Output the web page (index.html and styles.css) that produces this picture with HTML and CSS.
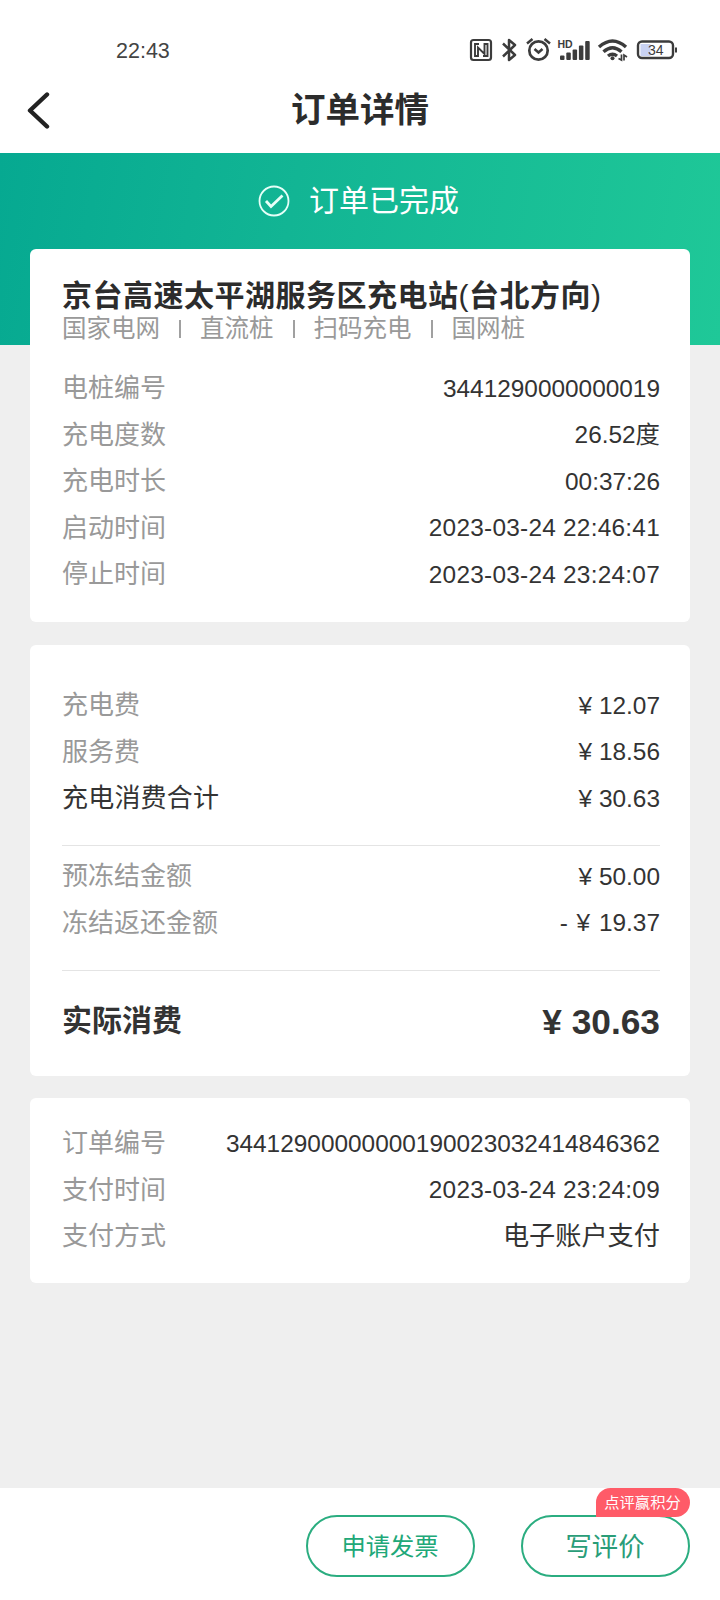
FILE: index.html
```html
<!DOCTYPE html>
<html lang="zh-CN">
<head>
<meta charset="utf-8">
<title>订单详情</title>
<link rel="stylesheet" href="styles.css">
</head>
<body>
<div class="screen">
  <div class="statusbar">
    <span class="clock">22:43</span>
    <svg class="sysicons" width="210" height="28" viewBox="468 36 210 28" fill="none" stroke="#3c3c3c" stroke-width="2">
      <rect x="471" y="40" width="20" height="20" rx="2.5" stroke-width="2.2"/>
      <path d="M479 44H475V56H478V47.500L484.500 54V44H487.500V56H483" stroke-width="1.900"/>
      <path d="M503 43.500l12 11.500-6 5V40l6 5-12 11.500" stroke-width="2.500" stroke-linejoin="round"/>
      <circle cx="538.500" cy="50.500" r="9.200" stroke-width="2.700"/>
      <path d="M534.500 49l4 3.500 4-3.500M527 43.500l5.500-4.500M550 43.500l-5.500-4.500" stroke-width="2.500"/>
      <g fill="#3c3c3c" stroke="none">
        <text class="hd" x="557.500" y="47.500">HD</text>
        <rect x="560" y="55.500" width="4.500" height="4.500" rx="1"/>
        <rect x="566.300" y="52.500" width="4.500" height="7.500" rx="1"/>
        <rect x="572.600" y="49.500" width="4.500" height="10.500" rx="1"/>
        <rect x="578.900" y="45.500" width="4.500" height="14.500" rx="1"/>
        <rect x="585.200" y="41" width="4.500" height="19" rx="1"/>
      </g>
      <path d="M599 47q13.500-12 27 0M603.500 51.800q9-8 18 0M608 56q4.500-3.500 9 0" stroke-width="3.400"/>
      <circle cx="612.500" cy="58.300" r="2" fill="#3c3c3c" stroke="none"/>
      <path d="M618.500 58.500l3 1.500v-5.500M624 60.500v-5.500l3 2" stroke-width="1.700"/>
      <rect x="640.500" y="44" width="10" height="12" fill="#c9d2f3" stroke="none"/>
      <rect x="638" y="41.500" width="35" height="16.500" rx="4" stroke-width="2.400"/>
      <path d="M676 47.500v5"/>
      <text class="charge" x="648" y="54.500">34</text>
    </svg>
  </div>
  <header class="navbar">
    <svg class="back" width="24" height="40" viewBox="0 0 24 40" fill="none" stroke="#222" stroke-width="4.400" stroke-linecap="round" stroke-linejoin="round"><path d="M20 4.500L3 20.500 20 36.500"/></svg>
    <h1>订单详情</h1>
  </header>
  <main>
    <div class="banner">
      <svg width="32" height="32" viewBox="0 0 32 32" fill="none" stroke="#e6fff8" stroke-width="1.800"><circle cx="16" cy="16" r="14.500"/><path d="M8 16l5 5.500L24.500 10.500" stroke-width="2.800"/></svg>
      <span>订单已完成</span>
    </div>
    <section class="card station">
      <h2>京台高速太平湖服务区充电站<i>(</i>台北方向<i>)</i></h2>
      <p class="tags"><span>国家电网</span><b></b><span>直流桩</span><b></b><span>扫码充电</span><b></b><span>国网桩</span></p>
      <dl>
        <div><dt>电桩编号</dt><dd>3441290000000019</dd></div>
        <div><dt>充电度数</dt><dd>26.52度</dd></div>
        <div><dt>充电时长</dt><dd>00:37:26</dd></div>
        <div><dt>启动时间</dt><dd class="date">2023-03-24 22:46:41</dd></div>
        <div><dt>停止时间</dt><dd class="date">2023-03-24 23:24:07</dd></div>
      </dl>
    </section>
    <section class="card fees">
      <dl>
        <div><dt>充电费</dt><dd>¥ 12.07</dd></div>
        <div><dt>服务费</dt><dd>¥ 18.56</dd></div>
        <div><dt class="dark">充电消费合计</dt><dd>¥ 30.63</dd></div>
      </dl>
      <dl class="frozen">
        <div><dt>预冻结金额</dt><dd>¥ 50.00</dd></div>
        <div><dt>冻结返还金额</dt><dd class="refund">- ¥ 19.37</dd></div>
      </dl>
      <div class="total"><span>实际消费</span><strong>¥ 30.63</strong></div>
    </section>
    <section class="card payment">
      <dl>
        <div><dt>订单编号</dt><dd>34412900000000190023032414846362</dd></div>
        <div><dt>支付时间</dt><dd class="date">2023-03-24 23:24:09</dd></div>
        <div><dt>支付方式</dt><dd class="method">电子账户支付</dd></div>
      </dl>
    </section>
  </main>
  <footer>
    <button class="invoice">申请发票</button>
    <button class="review">写评价<span class="badge">点评赢积分</span></button>
  </footer>
</div>
</body>
</html>
```
FILE: styles.css
```css
* { box-sizing: border-box; margin: 0; padding: 0; }
body { font-family: "Liberation Sans", "Noto Sans CJK SC", sans-serif; color: #333; background: #efefef; }
.screen { width: 720px; height: 1600px; display: flex; flex-direction: column; overflow: hidden; }
.statusbar { height: 72px; flex: none; background: #fff; display: flex; justify-content: space-between; padding: 36px 42px 0 116px; }
.clock { font-size: 21.5px; line-height: 30px; color: #444; }
.hd { font: bold 10.5px "Liberation Sans", sans-serif; }
.charge { font: 14px "Liberation Sans", sans-serif; fill: #3c3c3c; stroke: none; }
.navbar { height: 81px; flex: none; background: #fff; display: grid; grid-template-columns: 1fr auto 1fr; align-items: start; padding: 18px 26px 0; }
.back { margin-left: 1px; }
.navbar h1 { font-size: 34.5px; line-height: 40px; font-weight: 700; color: #2c2c2c; }
main { flex: 1; }
.banner { height: 192px; display: flex; justify-content: center; align-items: flex-start; gap: 19px; padding: 32px 3px 0 0; background: linear-gradient(100deg, #06a991 0%, #12b594 40%, #1fc898 100%); color: #fff; font-size: 30px; line-height: 32px; }
.card { margin: 0 30px; background: #fff; border-radius: 6px; padding: 0 30px 0 32px; }
.station { position: relative; margin-top: -96px; height: 373px; padding-top: 28px; }
.station h2 { font-size: 30px; line-height: 38px; font-weight: 700; letter-spacing: 0.5px; color: #2c2c2c; white-space: nowrap; }
.station h2 i { font-style: normal; font-weight: 400; }
.tags { display: flex; align-items: center; gap: 19px; height: 28px; font-size: 24.5px; line-height: 28px; color: #999; }
.tags b { width: 2px; height: 18px; background: #a0a0a0; }
.station dl { padding-top: 22px; }
dl > div { display: flex; justify-content: space-between; align-items: center; height: 46.5px; line-height: 42px; }
dt { font-size: 26px; color: #999; }
dt.dark { color: #333; letter-spacing: 0.2px; }
dd { font-size: 24.4px; color: #333; padding-top: 1px; }
.date { letter-spacing: 0.25px; }
.refund { word-spacing: 2px; }
dd.method { font-size: 26.2px; padding-top: 0; }
.fees { margin-top: 23px; height: 431px; padding-top: 37px; }
.fees dl { height: 164px; border-bottom: 1px solid #e4e4e4; }
.fees .frozen { height: 125px; padding-top: 7px; }
.total { display: flex; justify-content: space-between; align-items: center; height: 101px; font-size: 30px; line-height: 42px; font-weight: 700; }
.total span { padding-bottom: 2px; }
.total strong { font-size: 35.3px; }
.payment { margin-top: 22px; height: 185px; padding-top: 22px; }
footer { height: 112px; flex: none; background: #fff; display: flex; justify-content: flex-end; gap: 46px; padding: 27px 30.5px 0; }
button { position: relative; width: 169px; height: 62px; padding-bottom: 4px; border: 2px solid #2bad80; border-radius: 31px; background: #fff; color: #20a878; font-family: inherit; font-size: 24.3px; }
.review { font-size: 26.3px; color: #2a9d78; }
.badge { position: absolute; right: -2px; top: -29px; width: 94px; height: 29px; border-radius: 15px 15px 15px 0; background: #ff5b68; color: #fff; font-size: 15.3px; line-height: 29px; text-align: center; }
```
